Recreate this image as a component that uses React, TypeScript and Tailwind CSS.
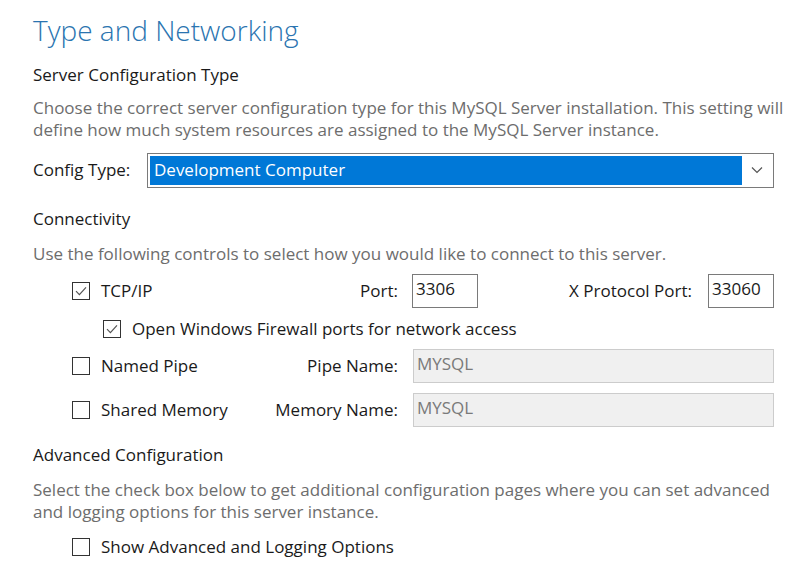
import { ReactNode } from 'react'

function CheckBox({ checked = false }: { checked?: boolean }) {
  return (
    <div className="flex h-[18px] w-[18px] shrink-0 items-center justify-center border border-[#333333] bg-white">
      {checked && (
        <svg width="14" height="14" viewBox="0 0 14 14" fill="none">
          <path d="M2 7.2 L5.4 10.6 L12 3.4" stroke="#555555" strokeWidth="1.2" />
        </svg>
      )}
    </div>
  )
}

function Option({ checked, children, indent = false }: { checked?: boolean; children: ReactNode; indent?: boolean }) {
  return (
    <div className={`flex items-center gap-[11px] ${indent ? 'ml-[31px]' : ''}`}>
      <CheckBox checked={checked} />
      <span>{children}</span>
    </div>
  )
}

function TextBox({ value, disabled = false, className = '' }: { value: string; disabled?: boolean; className?: string }) {
  return (
    <div
      className={`h-[34px] border px-[3px] pt-[2px] leading-[24px] ${
        disabled ? 'border-[#cccccc] bg-[#f0f0f0] text-[#7a7a7a]' : 'border-[#7a7a7a] bg-white text-[#1a1a1a]'
      } ${className}`}
    >
      {value}
    </div>
  )
}

export default function App() {
  return (
    <div className="h-[584px] w-[796px] overflow-hidden bg-white pl-[33px] font-['Open_Sans',sans-serif] text-[17px] text-[#1a1a1a]">
      <div className="flex h-[60px] items-center">
        <h1 className="text-[28px] font-light text-[#2a74b0]">Type and Networking</h1>
      </div>

      <div className="flex h-[30px] items-center">Server Configuration Type</div>
      <p className="mt-[7px] w-[756px] leading-[22px] text-[#6d6d6d]">
        Choose the correct server configuration type for this MySQL Server installation. This setting will define how
        much system resources are assigned to the MySQL Server instance.
      </p>

      <div className="mt-[10px] flex h-[38px] items-center">
        <span className="w-[114px]">Config Type:</span>
        <div className="flex h-[35px] w-[627px] border border-[#7a7a7a] bg-white p-[2px]">
          <div className="flex flex-1 items-center bg-[#0078d7] px-[4px] text-white">Development Computer</div>
          <div className="flex w-[29px] items-center justify-center">
            <svg width="12" height="8" viewBox="0 0 12 8" fill="none">
              <path d="M1 1.5 L6 6.5 L11 1.5" stroke="#555555" strokeWidth="1.2" />
            </svg>
          </div>
        </div>
      </div>

      <div className="mt-[15px] flex h-[30px] items-center">Connectivity</div>
      <p className="mt-[9px] leading-[22px] text-[#6d6d6d]">
        Use the following controls to select how you would like to connect to this server.
      </p>

      <div className="ml-[39px] flex flex-col">
        <div className="mt-[9px] flex h-[34px] items-center">
          <div className="w-[200px]">
            <Option checked>TCP/IP</Option>
          </div>
          <span className="w-[126px] text-right">Port:</span>
          <TextBox value="3306" className="ml-[14px] w-[66px]" />
          <span className="w-[214px] text-right">X Protocol Port:</span>
          <TextBox value="33060" className="ml-[16px] w-[66px]" />
        </div>

        <div className="mt-[4px] flex h-[34px] items-center">
          <Option checked indent>
            Open Windows Firewall ports for network access
          </Option>
        </div>

        <div className="mt-[3px] flex h-[34px] items-center">
          <div className="w-[200px]">
            <Option>Named Pipe</Option>
          </div>
          <span className="w-[126px] text-right">Pipe Name:</span>
          <TextBox value="MYSQL" disabled className="ml-[15px] w-[361px]" />
        </div>

        <div className="mt-[10px] flex h-[34px] items-center">
          <div className="w-[200px]">
            <Option>Shared Memory</Option>
          </div>
          <span className="w-[126px] text-right">Memory Name:</span>
          <TextBox value="MYSQL" disabled className="ml-[15px] w-[361px]" />
        </div>
      </div>

      <div className="mt-[13px] flex h-[30px] items-center">Advanced Configuration</div>
      <p className="mt-[9px] w-[756px] leading-[22px] text-[#6d6d6d]">
        Select the check box below to get additional configuration pages where you can set advanced and logging options
        for this server instance.
      </p>

      <div className="ml-[39px] mt-[7px] flex h-[34px] items-center">
        <Option>Show Advanced and Logging Options</Option>
      </div>
    </div>
  )
}
